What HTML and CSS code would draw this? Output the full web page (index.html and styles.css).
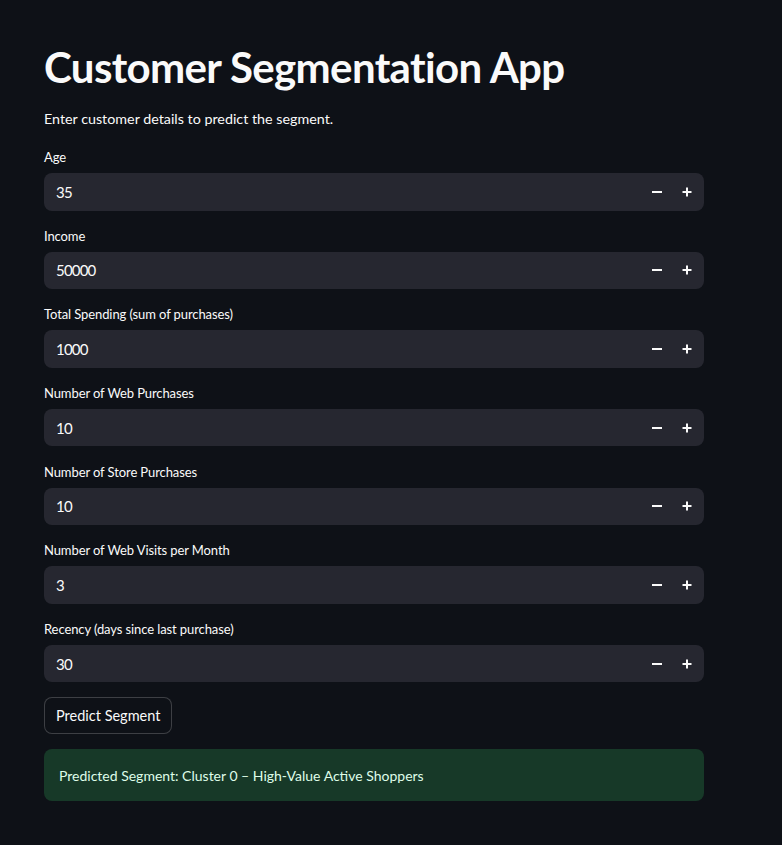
FILE: index.html
```html
<!DOCTYPE html>
<html>
<head>
<meta charset="utf-8">
<link rel="stylesheet" href="styles.css">
</head>
<body>
<main class="main">
  <h1 class="title">Customer Segmentation App</h1>
  <p class="subtitle">Enter customer details to predict the segment.</p>
  <div class="fields">
    <div class="field">
      <label class="label">Age</label>
      <div class="num-input"><span class="value">35</span><span class="step"><svg width="10" height="10" viewBox="0 0 10 10"><rect x="0" y="4" width="10" height="2" fill="#fafafa"/></svg></span><span class="step"><svg width="10" height="10" viewBox="0 0 10 10"><rect x="0.5" y="4" width="9" height="2" fill="#fafafa"/><rect x="4" y="0.5" width="2" height="9" fill="#fafafa"/></svg></span></div>
    </div>
    <div class="field">
      <label class="label">Income</label>
      <div class="num-input"><span class="value">50000</span><span class="step"><svg width="10" height="10" viewBox="0 0 10 10"><rect x="0" y="4" width="10" height="2" fill="#fafafa"/></svg></span><span class="step"><svg width="10" height="10" viewBox="0 0 10 10"><rect x="0.5" y="4" width="9" height="2" fill="#fafafa"/><rect x="4" y="0.5" width="2" height="9" fill="#fafafa"/></svg></span></div>
    </div>
    <div class="field">
      <label class="label">Total Spending (sum of purchases)</label>
      <div class="num-input"><span class="value">1000</span><span class="step"><svg width="10" height="10" viewBox="0 0 10 10"><rect x="0" y="4" width="10" height="2" fill="#fafafa"/></svg></span><span class="step"><svg width="10" height="10" viewBox="0 0 10 10"><rect x="0.5" y="4" width="9" height="2" fill="#fafafa"/><rect x="4" y="0.5" width="2" height="9" fill="#fafafa"/></svg></span></div>
    </div>
    <div class="field">
      <label class="label">Number of Web Purchases</label>
      <div class="num-input"><span class="value">10</span><span class="step"><svg width="10" height="10" viewBox="0 0 10 10"><rect x="0" y="4" width="10" height="2" fill="#fafafa"/></svg></span><span class="step"><svg width="10" height="10" viewBox="0 0 10 10"><rect x="0.5" y="4" width="9" height="2" fill="#fafafa"/><rect x="4" y="0.5" width="2" height="9" fill="#fafafa"/></svg></span></div>
    </div>
    <div class="field">
      <label class="label">Number of Store Purchases</label>
      <div class="num-input"><span class="value">10</span><span class="step"><svg width="10" height="10" viewBox="0 0 10 10"><rect x="0" y="4" width="10" height="2" fill="#fafafa"/></svg></span><span class="step"><svg width="10" height="10" viewBox="0 0 10 10"><rect x="0.5" y="4" width="9" height="2" fill="#fafafa"/><rect x="4" y="0.5" width="2" height="9" fill="#fafafa"/></svg></span></div>
    </div>
    <div class="field">
      <label class="label">Number of Web Visits per Month</label>
      <div class="num-input"><span class="value">3</span><span class="step"><svg width="10" height="10" viewBox="0 0 10 10"><rect x="0" y="4" width="10" height="2" fill="#fafafa"/></svg></span><span class="step"><svg width="10" height="10" viewBox="0 0 10 10"><rect x="0.5" y="4" width="9" height="2" fill="#fafafa"/><rect x="4" y="0.5" width="2" height="9" fill="#fafafa"/></svg></span></div>
    </div>
    <div class="field">
      <label class="label">Recency (days since last purchase)</label>
      <div class="num-input"><span class="value">30</span><span class="step"><svg width="10" height="10" viewBox="0 0 10 10"><rect x="0" y="4" width="10" height="2" fill="#fafafa"/></svg></span><span class="step"><svg width="10" height="10" viewBox="0 0 10 10"><rect x="0.5" y="4" width="9" height="2" fill="#fafafa"/><rect x="4" y="0.5" width="2" height="9" fill="#fafafa"/></svg></span></div>
    </div>
  </div>
  <button class="btn">Predict Segment</button>
  <div class="success">Predicted Segment: Cluster 0 – High-Value Active Shoppers</div>
</main>
</body>
</html>
```
FILE: styles.css
```css
html, body {
  margin: 0;
  padding: 0;
  background: #0e1117;
  color: #fafafa;
  font-family: Lato, "Open Sans", sans-serif;
}
.main {
  width: 660px;
  margin-left: 44px;
  padding-top: 40px;
}
.title {
  margin: 0;
  font-size: 42px;
  line-height: 54px;
  font-weight: 700;
  letter-spacing: -0.65px;
}
.subtitle {
  margin: 13px 0 0;
  font-size: 14.3px;
  line-height: 24px;
}
.fields {
  margin-top: 17px;
  display: flex;
  flex-direction: column;
  gap: 16.17px;
}
.field {
  display: flex;
  flex-direction: column;
}
.label {
  font-size: 13px;
  letter-spacing: -0.1px;
  line-height: 19px;
  height: 19px;
  margin-bottom: 6px;
}
.num-input {
  height: 37.5px;
  background: #262730;
  border-radius: 8px;
  display: flex;
  align-items: center;
  padding-left: 12px;
}
.value {
  flex: 1;
  font-size: 15px;
  letter-spacing: -0.8px;
}
.step {
  width: 30px;
  height: 37.5px;
  display: flex;
  align-items: center;
  justify-content: center;
}
.step svg { display: block; }
.step:last-child { margin-right: 2px; }
.btn {
  margin-top: 15px;
  height: 37px;
  padding: 0 11px;
  background: #0e1117;
  color: #fafafa;
  border: 1px solid rgba(250,250,250,0.2);
  border-radius: 8px;
  font-family: inherit;
  font-size: 14.5px;
  display: block;
}
.success {
  margin-top: 15px;
  height: 52px;
  box-sizing: border-box;
  padding: 0 15px;
  display: flex;
  align-items: center;
  background: #173928;
  color: #dffde9;
  border-radius: 8px;
  font-size: 14px;
}
```
